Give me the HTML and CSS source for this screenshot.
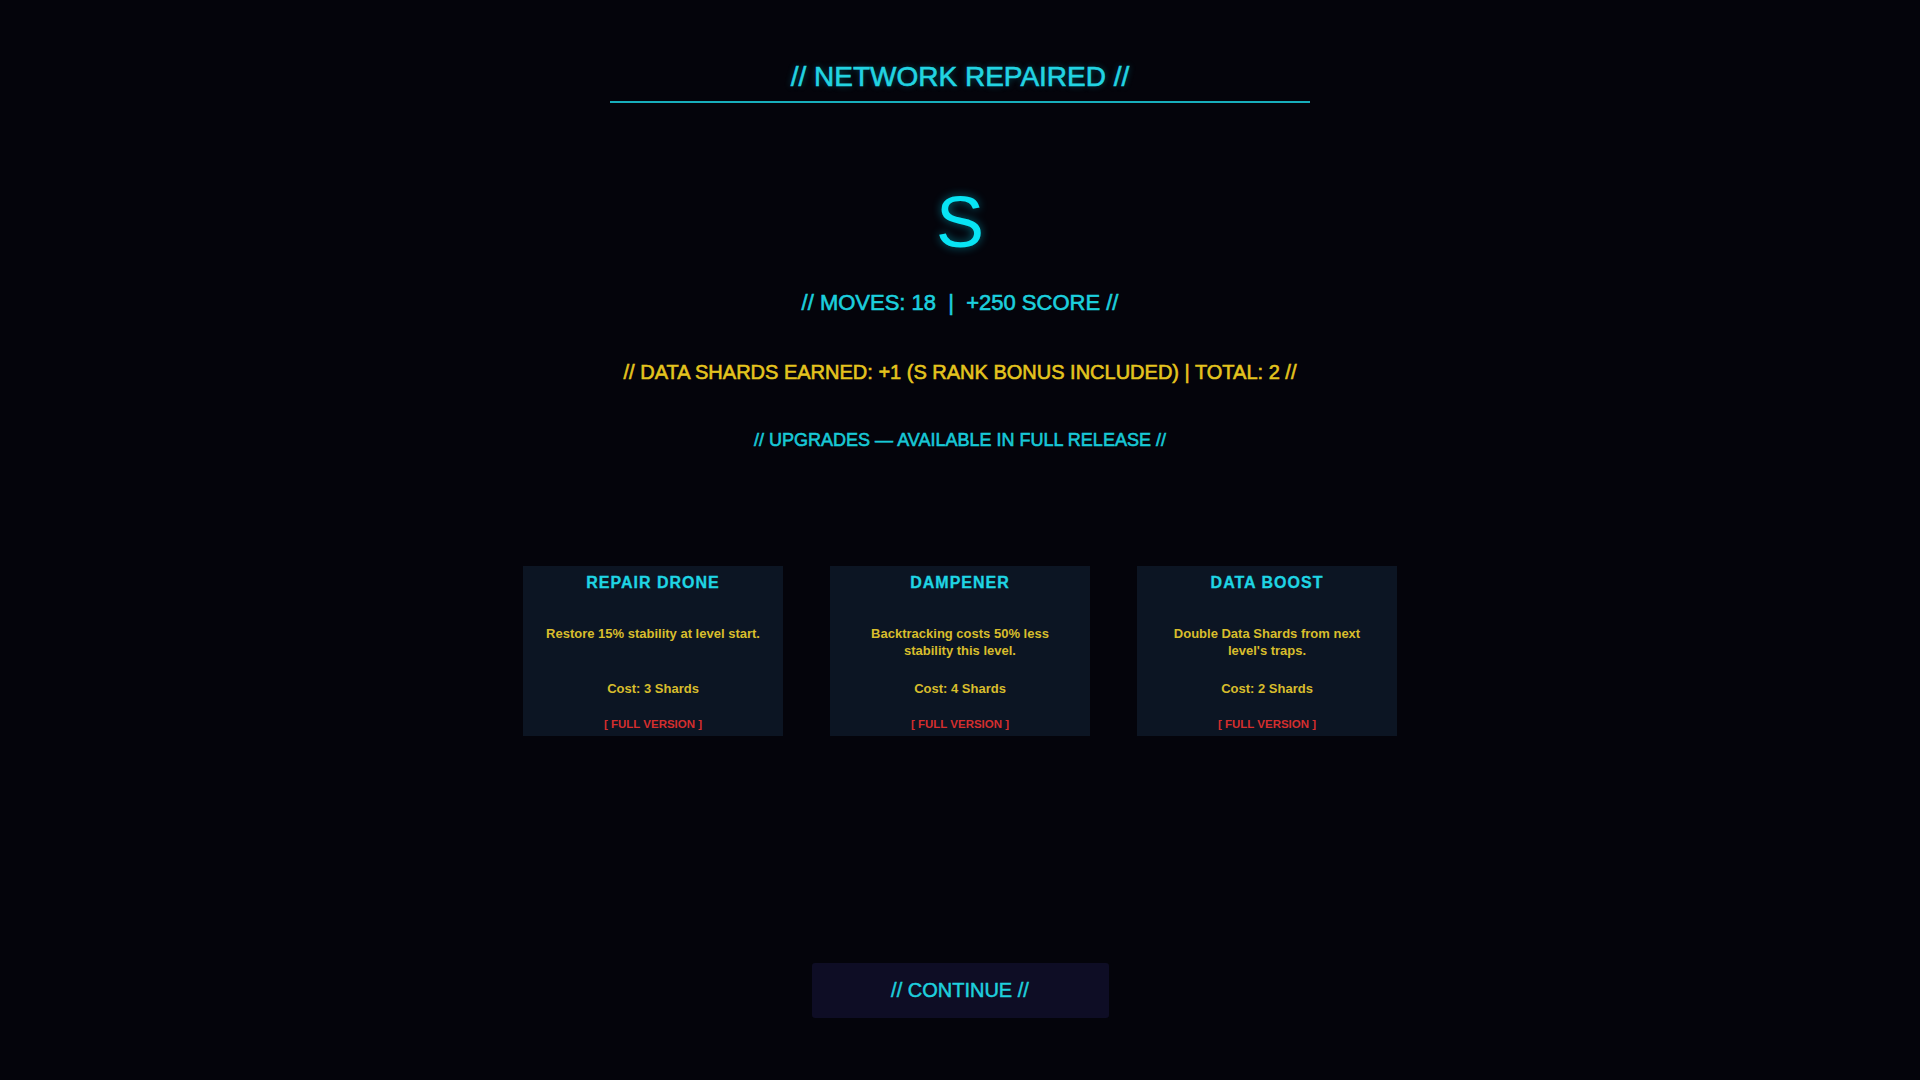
FILE: index.html
```html
<!DOCTYPE html>
<html lang="en">
<head>
<meta charset="utf-8">
<title>Network Repaired</title>
<link rel="stylesheet" href="styles.css">
</head>
<body>
<main class="screen">
  <h1 class="title">// NETWORK REPAIRED //</h1>
  <div class="rank">S</div>
  <p class="moves">// MOVES: 18 &nbsp;|&nbsp; +250 SCORE //</p>
  <p class="shards">// DATA SHARDS EARNED: +1 (S RANK BONUS INCLUDED) | TOTAL: 2 //</p>
  <p class="upgrades">// UPGRADES — AVAILABLE IN FULL RELEASE //</p>
  <section class="cards">
    <div class="card">
      <h3 class="card-title">REPAIR DRONE</h3>
      <p class="card-desc">Restore 15% stability at level start.</p>
      <p class="card-cost">Cost: 3 Shards</p>
      <p class="card-lock">[ FULL VERSION ]</p>
    </div>
    <div class="card">
      <h3 class="card-title">DAMPENER</h3>
      <p class="card-desc">Backtracking costs 50% less stability this level.</p>
      <p class="card-cost">Cost: 4 Shards</p>
      <p class="card-lock">[ FULL VERSION ]</p>
    </div>
    <div class="card">
      <h3 class="card-title">DATA BOOST</h3>
      <p class="card-desc">Double Data Shards from next level's traps.</p>
      <p class="card-cost">Cost: 2 Shards</p>
      <p class="card-lock">[ FULL VERSION ]</p>
    </div>
  </section>
  <button class="continue">// CONTINUE //</button>
</main>
</body>
</html>
```
FILE: styles.css
```css
html, body {
  margin: 0;
  padding: 0;
  background: #04040b;
  height: 100%;
}
body {
  font-family: "Liberation Sans", Arial, sans-serif;
  color: #1fd0de;
}
.screen {
  display: flex;
  flex-direction: column;
  align-items: center;
  padding-top: 61px;
}
.title {
  margin: 0;
  width: 700px;
  text-align: center;
  font-size: 28px;
  line-height: 32px;
  font-weight: normal;
  color: #22d4e2;
  padding-bottom: 8px;
  border-bottom: 2px solid #17aebb;
  -webkit-text-stroke: 0.6px #22d4e2;
  text-shadow: 0 0 6px rgba(0, 220, 240, 0.35);
}
.rank {
  margin-top: 83px;
  font-size: 72px;
  line-height: 72px;
  color: #08e4f4;
  text-shadow: 0 0 10px rgba(0, 229, 255, 0.45);
}
.moves {
  margin: 32px 0 0;
  font-size: 22px;
  line-height: 26px;
  color: #1ccfdd;
  white-space: pre;
  -webkit-text-stroke: 0.6px #1ccfdd;
}
.shards {
  margin: 44px 0 0;
  font-size: 20px;
  line-height: 24px;
  color: #e4c41e;
  -webkit-text-stroke: 0.6px #e4c41e;
}
.upgrades {
  margin: 45px 0 0;
  font-size: 18px;
  line-height: 22px;
  color: #18c8d6;
  -webkit-text-stroke: 0.6px #18c8d6;
}
.cards {
  margin-top: 115px;
  display: flex;
  gap: 47px;
}
.card {
  width: 260px;
  height: 170px;
  box-sizing: border-box;
  padding: 7px 18px 0;
  background: #0c1523;
  text-align: center;
}
.card-title {
  margin: 0;
  font-size: 16px;
  line-height: 19px;
  font-weight: bold;
  letter-spacing: 1px;
  color: #1fd5e4;
  -webkit-text-stroke: 0.3px #1fd5e4;
}
.card-desc {
  margin: 33px 0 0;
  min-height: 34px;
  font-size: 13px;
  line-height: 17px;
  font-weight: bold;
  color: #d8bd2c;
}
.card-cost {
  margin: 22px 0 0;
  font-size: 13px;
  line-height: 16px;
  font-weight: bold;
  color: #d8bd2c;
}
.card-lock {
  margin: 20px 0 0;
  font-size: 11.5px;
  line-height: 14px;
  font-weight: bold;
  color: #d42e2e;
}
.continue {
  margin-top: 227px;
  width: 297px;
  height: 55px;
  border: none;
  border-radius: 3px;
  background: #0e0d25;
  color: #1fd0de;
  font-family: "Liberation Sans", Arial, sans-serif;
  font-size: 20px;
  padding: 0;
  -webkit-text-stroke: 0.5px #1fd0de;
}
```
